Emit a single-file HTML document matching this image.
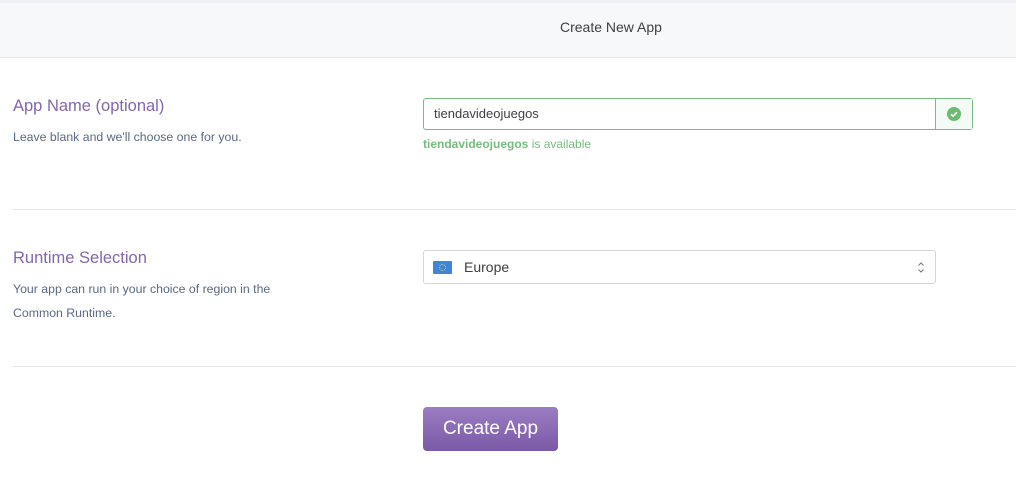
<!DOCTYPE html>
<html><head><style>
*{margin:0;padding:0;box-sizing:border-box}
body{width:1016px;height:483px;background:#fff;font-family:"Liberation Sans",sans-serif;position:relative;overflow:hidden}
.hdr{position:absolute;left:0;top:0;width:1016px;height:58px;background:#f7f8fa;border-top:3px solid #eef0f3;border-bottom:1px solid #e3e5e9}
.hdr span{position:absolute;left:560px;top:16px;font-size:14px;color:#3f3f44}
.abs{position:absolute}
.h{font-size:16.5px;color:#8267aa}
.s{font-size:12.3px;color:#596981;line-height:24px}
.hr{position:absolute;left:13px;width:1003px;height:1px;background:#e3e5e9}
</style></head><body>
<div class="hdr"><span>Create New App</span></div>
<div class="abs h" style="left:13px;top:97px">App Name (optional)</div>
<div class="abs s" style="left:13px;top:125px">Leave blank and we'll choose one for you.</div>
<div class="abs" style="left:423px;top:98px;width:550px;height:32px;border:1px solid #76bb7f;border-radius:3px;background:#fff">
<div class="abs" style="left:10px;top:7px;font-size:13px;color:#3f3f44">tiendavideojuegos</div>
<div class="abs" style="left:511px;top:0;width:37px;height:30px;border-left:1px solid #76bb7f;background:#f4faf5">
<svg class="abs" style="left:11px;top:8px" width="14" height="14" viewBox="0 0 14 14"><circle cx="7" cy="7" r="7" fill="#6dbb72"/><path d="M4 7.2l2 2 4-4" stroke="#fff" stroke-width="1.6" fill="none"/></svg></div></div>
<div class="abs" style="left:423px;top:137px;font-size:12px;color:#76bb7f"><b>tiendavideojuegos</b> is available</div>
<div class="hr" style="top:209px"></div>
<div class="abs h" style="left:13px;top:249px">Runtime Selection</div>
<div class="abs s" style="left:13px;top:277px">Your app can run in your choice of region in the<br>Common Runtime.</div>
<div class="abs" style="left:423px;top:250px;width:513px;height:34px;border:1px solid #d3d6dc;border-radius:3px;background:#fff">
<div class="abs" style="left:9px;top:10px;width:19px;height:13px;background:#3f86d6;border-radius:1px"><div class="abs" style="left:6px;top:3px;width:7px;height:7px;border:1px dotted #e8d050;border-radius:50%"></div></div>
<div class="abs" style="left:40px;top:8px;font-size:14px;color:#3f3f44">Europe</div>
<svg class="abs" style="left:493px;top:10px" width="8" height="13" viewBox="0 0 8 13"><path d="M1.5 4.5L4 2l2.5 2.5M1.5 8.5L4 11l2.5-2.5" stroke="#777" stroke-width="1" fill="none"/></svg></div>
<div class="hr" style="top:366px"></div>
<div class="abs" style="left:423px;top:407px;width:135px;height:44px;border-radius:4px;background:linear-gradient(#9b7dc3,#7a59a6);color:#fff;font-size:19px;text-align:center;line-height:44px">Create App</div>
</body></html>
